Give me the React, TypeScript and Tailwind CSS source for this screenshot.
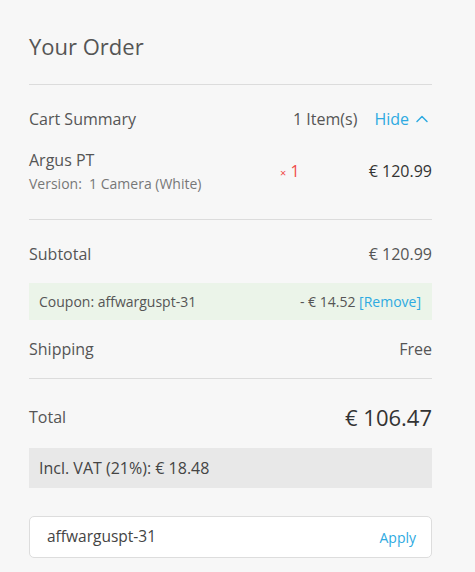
import { ChevronUp } from "lucide-react";

const font = { fontFamily: "'Open Sans', 'Noto Sans', sans-serif" };

export default function App() {
  return (
    <div
      className="min-h-[572px] w-full bg-[#f7f7f7] pl-[29px] pr-[43px] pt-[32px] text-[#555]"
      style={font}
    >
      {/* Title */}
      <h1 className="text-[22px] leading-[28px] text-[#555]">Your Order</h1>
      <div className="mt-[24px] h-px bg-[#dcdcdc]" />

      {/* Cart summary header */}
      <div className="mt-[22px] flex h-[24px] items-center justify-between text-[16px]">
        <span>Cart Summary</span>
        <div className="flex items-center">
          <span>1 Item(s)</span>
          <span className="ml-[17px] flex items-center text-[#2eaae1]">
            Hide
            <ChevronUp size={20} strokeWidth={1.8} className="ml-[3px]" />
          </span>
        </div>
      </div>

      {/* Product */}
      <div className="mt-[18px] flex items-center">
        <div className="flex-1">
          <div className="text-[16px] leading-[22px]">Argus PT</div>
          <div className="mt-[4px] text-[14px] leading-[18px] text-[#777]">
            Version:&nbsp; 1 Camera (White)
          </div>
        </div>
        <div className="w-[77px] text-[16px] text-[#f04a4a]">
          <span className="text-[11px]">×</span> 1
        </div>
        <div className="w-[75px] text-right text-[16px] text-[#333]">€ 120.99</div>
      </div>
      <div className="mt-[26px] h-px bg-[#dcdcdc]" />

      {/* Subtotal */}
      <div className="mt-[22px] flex h-[24px] items-center justify-between text-[16px]">
        <span>Subtotal</span>
        <span>€ 120.99</span>
      </div>

      {/* Coupon */}
      <div className="mt-[17px] flex h-[37px] items-center justify-between bg-[#ebf4e9] pl-[10px] pr-[11px] text-[14px]">
        <span>Coupon: affwarguspt-31</span>
        <span>
          - € 14.52 <span className="text-[#2eaae1]">[Remove]</span>
        </span>
      </div>

      {/* Shipping */}
      <div className="mt-[17px] flex h-[24px] items-center justify-between text-[16px]">
        <span>Shipping</span>
        <span>Free</span>
      </div>
      <div className="mt-[17px] h-px bg-[#dcdcdc]" />

      {/* Total */}
      <div className="mt-[22px] flex h-[32px] items-center justify-between">
        <span className="text-[16px]">Total</span>
        <span className="text-[22px] text-[#333]">€ 106.47</span>
      </div>

      {/* VAT */}
      <div className="mt-[15px] flex h-[40px] items-center bg-[#e8e8e8] pl-[10px] text-[16px] text-[#444]">
        Incl. VAT (21%): € 18.48
      </div>

      {/* Coupon input */}
      <div className="mt-[28px] flex h-[42px] items-center justify-between rounded-[5px] border border-[#dddddd] bg-white pl-[17px] pr-[15px]">
        <span className="text-[15.5px] text-[#444]">affwarguspt-31</span>
        <span className="text-[14px] text-[#2eaae1]">Apply</span>
      </div>
    </div>
  );
}
